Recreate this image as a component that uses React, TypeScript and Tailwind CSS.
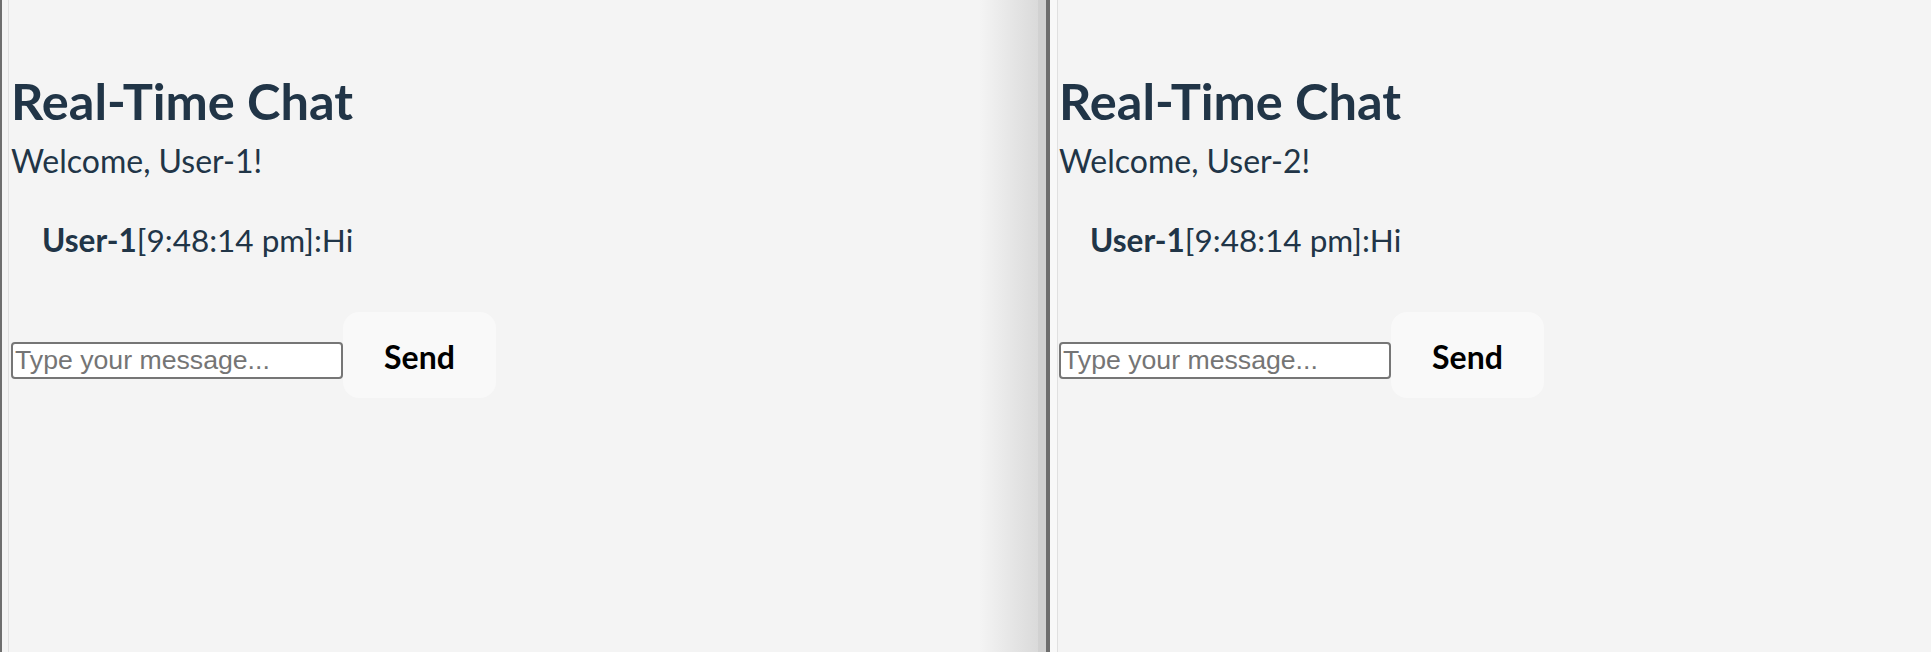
import { useState } from 'react';

type Message = { user: string; time: string; text: string };

const messages: Message[] = [{ user: 'User-1', time: '9:48:14 pm', text: 'Hi' }];

function ChatPanel({ username }: { username: string }) {
  const [draft, setDraft] = useState('');

  return (
    <div className="flex flex-col text-[#213547] font-['Lato',sans-serif]">
      <h1 className="mt-[73px] text-[50.5px] leading-[56px] font-bold">Real-Time Chat</h1>
      <p className="mt-[8px] text-[32px] leading-[48px]">Welcome, {username}!</p>
      <ul className="mt-[31px] pl-[31px]">
        {messages.map((m, i) => (
          <li key={i} className="text-[31.5px] leading-[48px]">
            <strong className="font-bold">{m.user}</strong>[{m.time}]:{m.text}
          </li>
        ))}
      </ul>
      <form className="mt-[48px] flex items-start" onSubmit={(e) => e.preventDefault()}>
        <input
          value={draft}
          onChange={(e) => setDraft(e.target.value)}
          placeholder="Type your message..."
          className="mt-[30px] h-[37px] w-[332px] rounded-[4px] border-2 border-[#767676] bg-white px-[2px] font-['Liberation_Sans',Arial,sans-serif] text-[26.67px] text-black placeholder:text-[#757575] outline-none"
        />
        <button
          type="submit"
          className="flex h-[86px] w-[153px] items-center justify-center rounded-[16px] bg-[#f9f9f9] pt-[3px] text-[32px] leading-[38px] font-bold text-black"
        >
          Send
        </button>
      </form>
    </div>
  );
}

export default function App() {
  return (
    <div className="flex h-[652px] w-full overflow-hidden bg-[#f4f4f4]">
      <div className="w-[2px] shrink-0 bg-[#6e6e6e]" />
      <div className="w-[6px] shrink-0" />
      <div className="w-px shrink-0 bg-[#e0e0e0]" />
      <div className="w-[971px] shrink-0 pl-[2px]">
        <ChatPanel username="User-1" />
      </div>
      <div className="w-[58px] shrink-0 bg-gradient-to-r from-[#f4f4f4] to-[#dadada]" />
      <div className="w-[8px] shrink-0 bg-[#d1d1d1]" />
      <div className="w-[4px] shrink-0 bg-[#6e6e6e]" />
      <div className="w-[7px] shrink-0 bg-[#f8f8f8]" />
      <div className="w-px shrink-0 bg-[#e0e0e0]" />
      <div className="flex-1 pl-px">
        <ChatPanel username="User-2" />
      </div>
    </div>
  );
}
